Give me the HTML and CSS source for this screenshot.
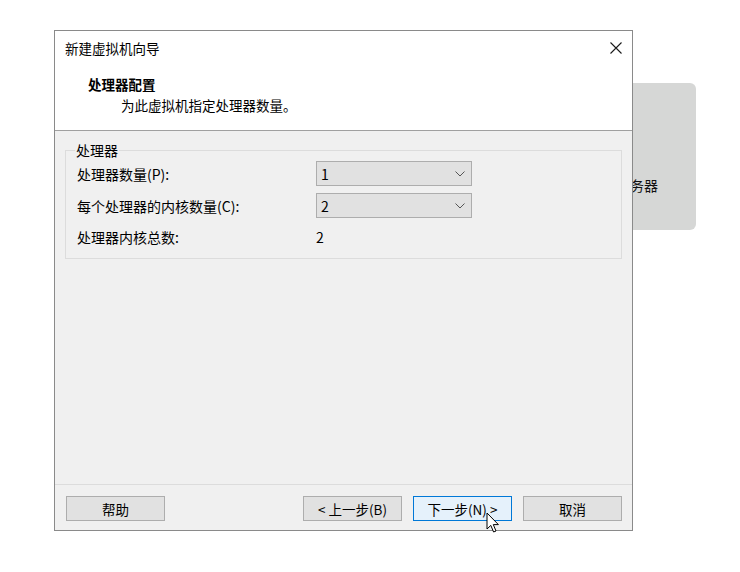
FILE: index.html
```html
<!DOCTYPE html>
<html lang="zh-CN">
<head>
<meta charset="utf-8">
<title>新建虚拟机向导</title>
<link rel="stylesheet" href="styles.css">
</head>
<body>
<div class="desktop">
  <div class="bg-card"><span class="bg-card-text">服务器</span></div>

  <div class="dialog">
    <div class="head">
      <div class="titlebar">
        <span class="title">新建虚拟机向导</span>
        <svg class="close" width="12" height="12" viewBox="0 0 12 12"><path d="M0.5 0.5 L11.5 11.5 M11.5 0.5 L0.5 11.5" stroke="#1a1a1a" stroke-width="1.1" fill="none"/></svg>
      </div>
      <div class="head-title">处理器配置</div>
      <div class="head-sub">为此虚拟机指定处理器数量。</div>
    </div>

    <div class="body">
      <fieldset class="group">
        <legend class="legend">处理器</legend>
        <div class="grid">
          <div class="label">处理器数量(P):</div>
          <div class="combo"><span>1</span><svg class="chev" width="10" height="6" viewBox="0 0 10 6"><path d="M0.5 0.5 L5 5 L9.5 0.5" stroke="#555" stroke-width="1" fill="none"/></svg></div>
          <div class="label">每个处理器的内核数量(C):</div>
          <div class="combo"><span>2</span><svg class="chev" width="10" height="6" viewBox="0 0 10 6"><path d="M0.5 0.5 L5 5 L9.5 0.5" stroke="#555" stroke-width="1" fill="none"/></svg></div>
          <div class="label total">处理器内核总数:</div>
          <div class="value total">2</div>
        </div>
      </fieldset>
    </div>

    <div class="footer">
      <button class="btn">帮助</button>
      <div class="spacer"></div>
      <button class="btn">&lt; 上一步(B)</button>
      <button class="btn primary">下一步(N) &gt;</button>
      <button class="btn">取消</button>
    </div>
  </div>

  <svg class="cursor" width="14" height="22" viewBox="0 0 14 22"><path d="M1 1 L1 17 L4.8 13.4 L7.6 20 L10 19 L7.3 12.6 L12.4 12.6 Z" fill="#fff" stroke="#000" stroke-width="1" stroke-linejoin="miter"/></svg>
</div>
</body>
</html>
```
FILE: styles.css
```css
html, body {
  margin: 0;
  padding: 0;
  background: #ffffff;
}
body {
  font-family: "Noto Sans CJK SC", "Noto Sans", sans-serif;
  font-size: 14px;
  color: #000;
}
.desktop {
  position: relative;
  width: 740px;
  height: 572px;
  overflow: hidden;
}
.bg-card {
  position: absolute;
  left: 560px;
  top: 83px;
  width: 136px;
  height: 147px;
  box-sizing: border-box;
  border-radius: 6px;
  background: #d6d7d6;
  padding: 92px 0 0 56px;
  line-height: 20px;
}
.bg-card-text {
  color: #111;
  font-size: 14px;
}
.dialog {
  position: absolute;
  left: 54px;
  top: 30px;
  width: 579px;
  height: 501px;
  box-sizing: border-box;
  border: 1px solid #8a8a8a;
  background: #f0f0f0;
  display: flex;
  flex-direction: column;
}
.head {
  height: 100px;
  box-sizing: border-box;
  background: #ffffff;
  border-bottom: 1px solid #a0a0a0;
}
.titlebar {
  height: 34px;
  display: flex;
  align-items: center;
  justify-content: space-between;
  padding: 0 10px 0 10px;
}
.title {
  font-size: 13.5px;
  line-height: 20px;
  color: #000;
}
.close {
  display: block;
}
.head-title {
  margin: 9px 0 0 33px;
  font-weight: bold;
  font-size: 13.5px;
  line-height: 21px;
}
.head-sub {
  margin-left: 66px;
  font-size: 13.5px;
  line-height: 20px;
}
.body {
  flex: 1;
  padding: 11px 10px 0 10px;
}
.group {
  margin: 0;
  padding: 0 10px 13px 11px;
  border: 1px solid #dcdcdc;
  min-width: 0;
}
.legend {
  padding: 0 1px;
  margin-left: -2px;
  line-height: 16px;
  font-size: 14px;
}
.grid {
  display: grid;
  grid-template-columns: 239px 156px;
  grid-template-rows: 25px 25px 20px;
  row-gap: 7px;
  align-items: center;
  padding-top: 3px;
}
.grid .total {
  margin-top: 4px;
}
.label {
  line-height: 20px;
}
.combo {
  height: 25px;
  box-sizing: border-box;
  border: 1px solid #adadad;
  background: #e1e1e1;
  display: flex;
  align-items: center;
  justify-content: space-between;
  padding: 0 6px 0 4px;
  line-height: 20px;
}
.chev {
  display: block;
}
.value {
  line-height: 20px;
}
.footer {
  height: 46px;
  box-sizing: border-box;
  border-top: 1px solid #dcdcdc;
  display: flex;
  align-items: flex-start;
  padding: 11px 10px 0 11px;
  gap: 11px;
}
.spacer {
  flex: 1;
}
.btn {
  width: 99px;
  height: 25px;
  box-sizing: border-box;
  border: 1px solid #adadad;
  background: #e1e1e1;
  font-family: "Noto Sans CJK SC", "Noto Sans", sans-serif;
  font-size: 13.5px;
  color: #000;
  padding: 0;
  line-height: 20px;
}
.btn.primary {
  border-color: #0078d7;
  background: #e5f1fb;
}
.cursor {
  position: absolute;
  left: 486px;
  top: 512px;
}
```
